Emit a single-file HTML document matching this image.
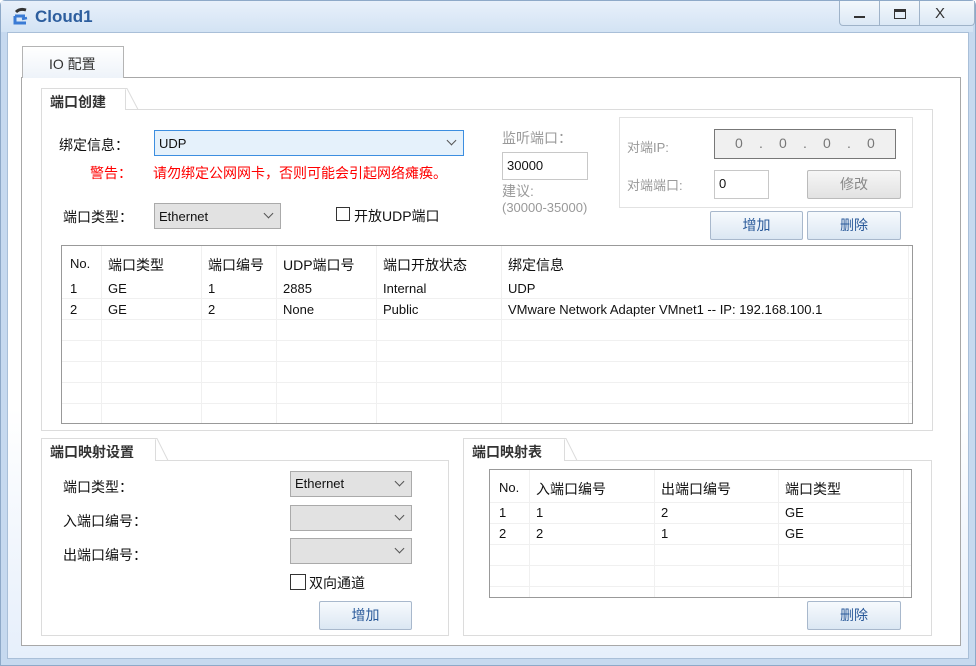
<!DOCTYPE html>
<html><head><meta charset="utf-8"><style>
*{box-sizing:border-box;margin:0;padding:0}
body{width:976px;height:666px;overflow:hidden;background:#fff;font-family:"Liberation Sans","Noto Sans CJK SC",sans-serif;font-size:13px;color:#111;position:relative}
.a{position:absolute}
.win{left:0;top:0;width:976px;height:666px;background:#c6d9ef;border:1px solid #8ea9c8;border-radius:5px 5px 0 0}
.title{left:1px;top:1px;width:972px;height:31px;background:linear-gradient(#e8f0fa,#d3e3f4)}
.client{left:7px;top:32px;width:962px;height:627px;background:linear-gradient(#fff 0%,#fff 60%,#e6effb 100%);border:1px solid #a9bfd8}
.t{white-space:nowrap}
.grp{border:1px solid #dcdcdc;background:#fff}
.gtab{background:#fff;border:1px solid #dcdcdc;border-bottom:none;font-weight:bold;color:#333;font-size:14px;padding:3px 0 0 8px}
.combo{border:1px solid #aaa;background:#e2e2e2;font-size:13px;padding:4px 0 0 4px}
.combo::after{content:"";position:absolute;right:8px;top:6px;width:6px;height:6px;border-right:1px solid #555;border-bottom:1px solid #555;transform:rotate(45deg)}
.btn{border:1px solid #a8b8cc;border-radius:2px;background:linear-gradient(#f7fafd,#dbe7f3);color:#2a5a9a;text-align:center;font-size:14px;line-height:26px}
.gray{color:#999}
.inp{border:1px solid #c8c8c8;background:#fff;padding:5px 0 0 4px}
.tbl{border:1px solid #999;background:#fff;overflow:hidden}
.cell{position:absolute;white-space:nowrap;padding-left:6px}
.hl{position:absolute;height:1px;background:#f0f0f0}
.vl{position:absolute;width:1px;background:#f0f0f0}
.cb{width:14px;height:14px;border:1px solid #333;background:#fff}
.ip{position:absolute;top:5px;color:#777;font-size:14px}
</style></head><body>
<div class="a win"></div>
<div class="a title"></div>
<svg class="a" style="left:12px;top:7px" width="22" height="20" viewBox="0 0 22 20"><path d="M4 5 Q8 1 14 3" stroke="#333" stroke-width="3" fill="none"/><path d="M3 9 H13 M3 9 V16 H14" stroke="#3a7bd5" stroke-width="3" fill="none"/><path d="M10 12 L15 11" stroke="#3a7bd5" stroke-width="2.5"/></svg>
<div class="a t" style="left:35px;top:7px;font-size:17px;font-weight:bold;color:#2d5e9e">Cloud1</div>
<div class="a" style="left:839px;top:1px;width:136px;height:25px;border:1px solid #9fb3c9;border-top:none;border-radius:0 0 4px 4px;background:linear-gradient(#f4f8fc,#dce8f5)"></div>
<div class="a" style="left:879px;top:1px;width:1px;height:25px;background:#9fb3c9"></div>
<div class="a" style="left:919px;top:1px;width:1px;height:25px;background:#9fb3c9"></div>
<div class="a" style="left:854px;top:16px;width:11px;height:2px;background:#333"></div>
<div class="a" style="left:894px;top:9px;width:12px;height:10px;border:1px solid #333;border-top:3px solid #333"></div>
<div class="a t" style="left:935px;top:5px;font-size:15px;color:#333">X</div>
<div class="a client"></div>
<div class="a" style="left:21px;top:77px;width:940px;height:569px;border:1px solid #a8a8a8;background:#fff"></div>
<div class="a" style="left:22px;top:46px;width:102px;height:32px;border:1px solid #b4b4b4;border-bottom:none;background:linear-gradient(#fff,#eef3f9)"></div>
<div class="a t" style="left:49px;top:54px;font-size:14px;color:#333">IO 配置</div>
<div class="a grp" style="left:41px;top:109px;width:892px;height:322px"></div>
<div class="a gtab" style="left:41px;top:88px;width:85px;height:22px">端口创建</div>
<svg class="a" style="left:125px;top:88px" width="14" height="22"><path d="M0 0.5 L2 0.5 L13 21.5" stroke="#dcdcdc" fill="#fff"/></svg>
<div class="a t" style="left:59px;top:135px;font-size:14px">绑定信息：</div>
<div class="a combo" style="left:154px;top:130px;width:310px;height:26px;background:#e5f1fb;border-color:#3c8ee0;padding-top:5px">UDP</div>
<div class="a t" style="left:90px;top:163px;font-size:14px;color:#f00">警告：</div>
<div class="a t" style="left:153px;top:163px;font-size:14px;color:#f00">请勿绑定公网网卡，否则可能会引起网络瘫痪。</div>
<div class="a t" style="left:63px;top:207px;font-size:14px">端口类型：</div>
<div class="a combo" style="left:154px;top:203px;width:127px;height:26px;padding-top:5px">Ethernet</div>
<div class="a cb" style="left:336px;top:207px"></div>
<div class="a t" style="left:354px;top:206px;font-size:14px">开放UDP端口</div>
<div class="a t gray" style="left:502px;top:128px;font-size:14px">监听端口：</div>
<div class="a inp" style="left:502px;top:152px;width:86px;height:28px">30000</div>
<div class="a t gray" style="left:502px;top:181px;font-size:14px">建议:</div>
<div class="a t gray" style="left:502px;top:200px">(30000-35000)</div>
<div class="a" style="left:619px;top:117px;width:294px;height:91px;border:1px solid #e2e2e2"></div>
<div class="a t gray" style="left:627px;top:137px">对端IP:</div>
<div class="a" style="left:714px;top:129px;width:182px;height:30px;border:1px solid #777;background:#f0f0f0">
<span class="ip" style="left:20px">0</span><span class="ip" style="left:44px">.</span><span class="ip" style="left:64px">0</span><span class="ip" style="left:88px">.</span><span class="ip" style="left:108px">0</span><span class="ip" style="left:132px">.</span><span class="ip" style="left:152px">0</span></div>
<div class="a t gray" style="left:627px;top:175px">对端端口:</div>
<div class="a inp" style="left:714px;top:170px;width:55px;height:29px">0</div>
<div class="a btn" style="left:807px;top:170px;width:94px;height:29px;color:#888;background:linear-gradient(#f6f6f6,#e2e2e2);border-color:#bbb">修改</div>
<div class="a btn" style="left:710px;top:211px;width:93px;height:29px">增加</div>
<div class="a btn" style="left:807px;top:211px;width:94px;height:29px">删除</div>
<div class="a tbl" style="left:61px;top:245px;width:852px;height:179px">
<div class="hl" style="left:0;top:52px;width:850px"></div>
<div class="hl" style="left:0;top:73px;width:850px"></div>
<div class="hl" style="left:0;top:94px;width:850px"></div>
<div class="hl" style="left:0;top:115px;width:850px"></div>
<div class="hl" style="left:0;top:136px;width:850px"></div>
<div class="hl" style="left:0;top:157px;width:850px"></div>
<div class="vl" style="left:39px;top:0;height:180px"></div>
<div class="vl" style="left:139px;top:0;height:180px"></div>
<div class="vl" style="left:214px;top:0;height:180px"></div>
<div class="vl" style="left:314px;top:0;height:180px"></div>
<div class="vl" style="left:439px;top:0;height:180px"></div>
<div class="vl" style="left:846px;top:0;height:180px"></div>
<div class="cell" style="left:2px;top:10px">No.</div><div class="cell" style="left:40px;top:9px;font-size:14px">端口类型</div><div class="cell" style="left:140px;top:9px;font-size:14px">端口编号</div><div class="cell" style="left:215px;top:9px;font-size:14px">UDP端口号</div><div class="cell" style="left:315px;top:9px;font-size:14px">端口开放状态</div><div class="cell" style="left:440px;top:9px;font-size:14px">绑定信息</div>
<div class="cell" style="left:2px;top:35px">1</div><div class="cell" style="left:40px;top:35px">GE</div><div class="cell" style="left:140px;top:35px">1</div><div class="cell" style="left:215px;top:35px">2885</div><div class="cell" style="left:315px;top:35px">Internal</div><div class="cell" style="left:440px;top:35px">UDP</div>
<div class="cell" style="left:2px;top:56px">2</div><div class="cell" style="left:40px;top:56px">GE</div><div class="cell" style="left:140px;top:56px">2</div><div class="cell" style="left:215px;top:56px">None</div><div class="cell" style="left:315px;top:56px">Public</div><div class="cell" style="left:440px;top:56px">VMware Network Adapter VMnet1 -- IP: 192.168.100.1</div>
</div>
<div class="a grp" style="left:41px;top:460px;width:408px;height:176px"></div>
<div class="a gtab" style="left:41px;top:438px;width:115px;height:23px">端口映射设置</div>
<svg class="a" style="left:155px;top:438px" width="14" height="23"><path d="M0 0.5 L2 0.5 L13 22.5" stroke="#dcdcdc" fill="#fff"/></svg>
<div class="a t" style="left:63px;top:477px;font-size:14px">端口类型：</div>
<div class="a t" style="left:63px;top:511px;font-size:14px">入端口编号：</div>
<div class="a t" style="left:63px;top:545px;font-size:14px">出端口编号：</div>
<div class="a combo" style="left:290px;top:471px;width:122px;height:26px">Ethernet</div>
<div class="a combo" style="left:290px;top:505px;width:122px;height:26px"></div>
<div class="a combo" style="left:290px;top:538px;width:122px;height:26px"></div>
<div class="a cb" style="left:290px;top:574px;width:16px;height:16px"></div>
<div class="a t" style="left:309px;top:573px;font-size:14px">双向通道</div>
<div class="a btn" style="left:319px;top:601px;width:93px;height:29px">增加</div>
<div class="a grp" style="left:463px;top:460px;width:469px;height:176px"></div>
<div class="a gtab" style="left:463px;top:438px;width:102px;height:23px">端口映射表</div>
<svg class="a" style="left:564px;top:438px" width="14" height="23"><path d="M0 0.5 L2 0.5 L13 22.5" stroke="#dcdcdc" fill="#fff"/></svg>
<div class="a tbl" style="left:489px;top:469px;width:423px;height:129px">
<div class="hl" style="left:0;top:32px;width:421px"></div>
<div class="hl" style="left:0;top:53px;width:421px"></div>
<div class="hl" style="left:0;top:74px;width:421px"></div>
<div class="hl" style="left:0;top:95px;width:421px"></div>
<div class="hl" style="left:0;top:116px;width:421px"></div>
<div class="vl" style="left:39px;top:0;height:130px"></div>
<div class="vl" style="left:164px;top:0;height:130px"></div>
<div class="vl" style="left:288px;top:0;height:130px"></div>
<div class="vl" style="left:413px;top:0;height:130px"></div>
<div class="cell" style="left:3px;top:10px">No.</div><div class="cell" style="left:40px;top:9px;font-size:14px">入端口编号</div><div class="cell" style="left:165px;top:9px;font-size:14px">出端口编号</div><div class="cell" style="left:289px;top:9px;font-size:14px">端口类型</div>
<div class="cell" style="left:3px;top:35px">1</div><div class="cell" style="left:40px;top:35px">1</div><div class="cell" style="left:165px;top:35px">2</div><div class="cell" style="left:289px;top:35px">GE</div>
<div class="cell" style="left:3px;top:56px">2</div><div class="cell" style="left:40px;top:56px">2</div><div class="cell" style="left:165px;top:56px">1</div><div class="cell" style="left:289px;top:56px">GE</div>
</div>
<div class="a btn" style="left:807px;top:601px;width:94px;height:29px">删除</div>
</body></html>
